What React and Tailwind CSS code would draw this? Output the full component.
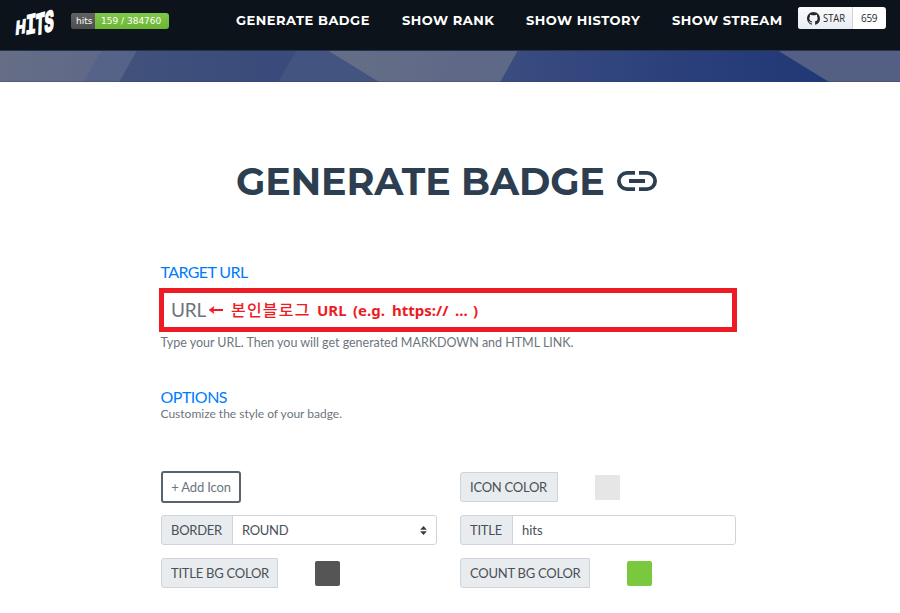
import React from "react";

const heading = "font-['Montserrat','Inter',sans-serif]";

function Logo() {
  return (
    <svg width="46" height="38" viewBox="0 0 46 38" className="block overflow-visible" fill="#fff" stroke="#fff" strokeWidth="0.9" fontFamily="Inter, sans-serif" fontWeight="800">
      <text fontSize="16" transform="matrix(0.82 -0.2 -0.1 1.17 1.2 33)">H</text>
      <text fontSize="16" fontFamily="Liberation Mono, monospace" fontWeight="700" transform="matrix(1.08 -0.24 -0.05 1.78 11.6 32.6)">I</text>
      <text fontSize="16" transform="matrix(0.84 -0.26 -0.06 1.78 21.2 33.6)">T</text>
      <text fontSize="16" transform="matrix(0.88 -0.3 -0.04 1.75 30.2 31)">S</text>
    </svg>
  );
}

function Nav({ children, width }) {
  return (
    <a className={`${heading} ${width} block whitespace-nowrap text-[13px] leading-[20px] font-bold tracking-[0.5px] text-white`}>
      {children}
    </a>
  );
}

function Label({ children, width }) {
  return (
    <div className={`${width} flex h-[30px] shrink-0 items-center rounded-l-[3px] border border-[#ced4da] bg-[#e9ecef] pt-px pl-[9px] text-[13px] tracking-[-0.25px] whitespace-nowrap text-[#495057]`}>
      {children}
    </div>
  );
}

function Hero() {
  return (
    <svg width="900" height="32" viewBox="0 0 900 32" className="block" preserveAspectRatio="none">
      <defs>
        <linearGradient id="sky" gradientUnits="userSpaceOnUse" x1="0" y1="0" x2="900" y2="0">
          <stop offset="0" stopColor="#48577d" />
          <stop offset="0.3" stopColor="#3a4b7b" />
          <stop offset="0.55" stopColor="#3b4d80" />
          <stop offset="0.75" stopColor="#2b407b" />
          <stop offset="1" stopColor="#1b3473" />
        </linearGradient>
        <linearGradient id="mist" x1="0" x2="1">
          <stop offset="0" stopColor="#666e86" />
          <stop offset="1" stopColor="#5c6788" />
        </linearGradient>
      </defs>
      <rect width="900" height="32" fill="url(#sky)" />
      <path d="M0 0H137L119 32H0Z" fill="url(#mist)" />
      <path d="M102 0H137L119 32H83Z" fill="#53628a" opacity=".75" />
      <path d="M297 0H327L379 32H278Z" fill="#435480" />
      <path d="M327 0H518L500 32H379Z" fill="url(#mist)" />
      <path d="M457 0H518L500 32H438Z" fill="#5f6987" opacity=".65" />
      <path d="M777 0H900V32H829Z" fill="#536084" />
      <rect width="900" height="1" fill="#263350" />
      <rect y="31" width="900" height="1" fill="#35436b" opacity=".4" />
    </svg>
  );
}

export default function App() {
  return (
    <div className="h-[613px] w-[900px] overflow-hidden bg-white font-['Lato',sans-serif]">
      <header className="flex h-[50px] items-start bg-[#0c131a]">
        <div className="ml-[14px] mt-[2px] w-[57px]"><Logo /></div>
        <div className="mt-[13px] flex h-[16px] w-[98px] overflow-hidden rounded-[3px] font-['DejaVu_Sans',sans-serif] text-[9px] leading-[16px] text-white">
          <span className="w-[24px] bg-[#555] bg-linear-to-b from-[#626262] to-[#4d4d4d] pl-[5px]">hits</span>
          <span className="flex-1 bg-linear-to-b from-[#80c849] to-[#6db535] pl-[6px] whitespace-nowrap">159 / 384760</span>
        </div>
        <nav className="ml-[67px] mt-[10px] flex">
          <Nav width="w-[166px]">GENERATE BADGE</Nav>
          <Nav width="w-[124px]">SHOW RANK</Nav>
          <Nav width="w-[146px]">SHOW HISTORY</Nav>
          <Nav width="w-[126px]">SHOW STREAM</Nav>
        </nav>
        <div className="mt-[7px] flex h-[22px] w-[88px] overflow-hidden rounded-[3px] bg-white font-['Open_Sans',sans-serif] text-[10px] leading-[22px] text-[#24292e]">
          <div className="flex w-[55px] items-center border-r border-[#d1d5da] bg-linear-to-b from-[#fafbfc] to-[#e9ecf1] pl-[9px]">
            <svg width="13" height="13" viewBox="0 0 16 16" fill="currentColor" className="mr-[3px] shrink-0">
              <path d="M8 0C3.58 0 0 3.58 0 8c0 3.54 2.29 6.53 5.47 7.59.4.07.55-.17.55-.38 0-.19-.01-.82-.01-1.49-2.01.37-2.53-.49-2.69-.94-.09-.23-.48-.94-.82-1.13-.28-.15-.68-.52-.01-.53.63-.01 1.08.58 1.23.82.72 1.21 1.87.87 2.33.66.07-.52.28-.87.51-1.07-1.78-.2-3.64-.89-3.64-3.95 0-.87.31-1.59.82-2.15-.08-.2-.36-1.02.08-2.12 0 0 .67-.21 2.2.82A7.6 7.6 0 0 1 8 3.86c.68 0 1.36.09 2 .27 1.53-1.04 2.2-.82 2.2-.82.44 1.1.16 1.92.08 2.12.51.56.82 1.27.82 2.15 0 3.07-1.87 3.75-3.65 3.95.29.25.54.73.54 1.48 0 1.07-.01 1.93-.01 2.2 0 .21.15.46.55.38A8.01 8.01 0 0 0 16 8c0-4.42-3.58-8-8-8z" />
            </svg>
            <span className="inline-block origin-left scale-x-[0.94]">STAR</span>
          </div>
          <span className="flex-1 pl-[8px] tracking-[-0.3px]">659</span>
        </div>
      </header>
      <Hero />

      <main className="ml-[160px] w-[577px]">
        <div className="mt-[76px] ml-[76px] flex h-[46px] items-center text-[#2c3e50]">
          <h1 className={`${heading} w-[381px] pt-px text-[38px] leading-[46px] font-bold tracking-[-0.15px] whitespace-nowrap`}>GENERATE BADGE</h1>
          <svg width="40" height="20" viewBox="0 0 40 20" fill="none" stroke="currentColor" strokeWidth="3.8">
            <path d="M18 1.9H10a8.1 8.1 0 0 0 0 16.2H18M22 1.9H30a8.1 8.1 0 0 1 0 16.2H22M12 10H28" />
          </svg>
        </div>

        <h2 className="mt-[57px] h-[22px] pl-[0.5px] text-[16px] leading-[22px] tracking-[-0.6px] text-[#007bff]">TARGET URL</h2>
        <div className="mt-[5px] -ml-px flex h-[44px] w-[578px] items-center border-5 border-[#ed1c24] pl-[7px]">
          <span className="w-[37px] text-[19px] tracking-[-0.2px] text-[#6c757d]">URL</span>
          <span className="flex items-center text-[15px] font-bold whitespace-pre text-[#ed1c24] font-['Noto_Sans','Noto_Sans_CJK_KR',sans-serif]">
            <svg width="16" height="10" viewBox="0 0 16 10" className="mr-[7px]" stroke="currentColor" fill="currentColor">
              <path d="M4 5H15" strokeWidth="2" /><path d="M1 5L6 1.5L5 5L6 8.5Z" strokeWidth="0.5" />
            </svg>
            <span className="w-[86px] text-[16px] font-medium tracking-[1.2px]">본인블로그</span>
            <span className="w-[36px]">URL</span>
            <span className="w-[39px]">(e.g.</span>
            <span className="w-[63px]">https://</span>
            <span className="w-[18px]">...</span>
            <span>)</span>
          </span>
        </div>
        <p className="mt-[2px] h-[18px] pl-[0.5px] text-[12.5px] leading-[18px] tracking-[-0.02px] text-[#6c757d]">Type your URL. Then you will get generated MARKDOWN and HTML LINK.</p>

        <h2 className="mt-[34px] h-[22px] pl-[0.5px] text-[16px] leading-[22px] tracking-[-0.5px] text-[#007bff]">OPTIONS</h2>
        <p className="-mt-[3px] h-[18px] pl-[0.5px] text-[12px] leading-[18px] text-[#6c757d]">Customize the style of your badge.</p>

        <div className="mt-[49px] ml-px grid grid-cols-[276px_276px] gap-x-[23px] gap-y-[13px]">
          <div className="h-[30px]">
            <button className="-mt-px flex h-[32px] w-[80px] items-center justify-center rounded-[3px] border-2 border-[#59636d] pt-[2px] text-[13px] tracking-[-0.15px] text-[#6c757d]">+ Add Icon</button>
          </div>
          <div className="flex items-center">
            <Label width="w-[98px]">ICON COLOR</Label>
            <div className="mt-px ml-[37px] size-[25px] bg-[#e6e6e6]" />
          </div>
          <div className="flex">
            <Label width="w-[72px]">BORDER</Label>
            <div className="-ml-px flex h-[30px] flex-1 items-center justify-between rounded-r-[3px] border border-[#ced4da] pt-px pr-[9px] pl-[9px] text-[13px] tracking-[-0.3px] text-[#495057]">
              ROUND
              <svg width="7" height="9" viewBox="0 0 7 9" fill="#343a40"><path d="M3.5 0L6.8 3.7H.2ZM3.5 9L6.8 5.3H.2Z" /></svg>
            </div>
          </div>
          <div className="flex">
            <Label width="w-[53px]">TITLE</Label>
            <div className="-ml-px flex h-[30px] flex-1 items-center rounded-r-[3px] border border-[#ced4da] pt-px pl-[9px] text-[13px] text-[#495057]">hits</div>
          </div>
          <div className="flex items-center">
            <Label width="w-[117px]">TITLE BG COLOR</Label>
            <div className="ml-[37px] size-[25px] rounded-[2px] bg-[#555]" />
          </div>
          <div className="flex items-center">
            <Label width="w-[130px]">COUNT BG COLOR</Label>
            <div className="ml-[37px] size-[25px] rounded-[2px] bg-[#79c83d]" />
          </div>
        </div>
      </main>
    </div>
  );
}
